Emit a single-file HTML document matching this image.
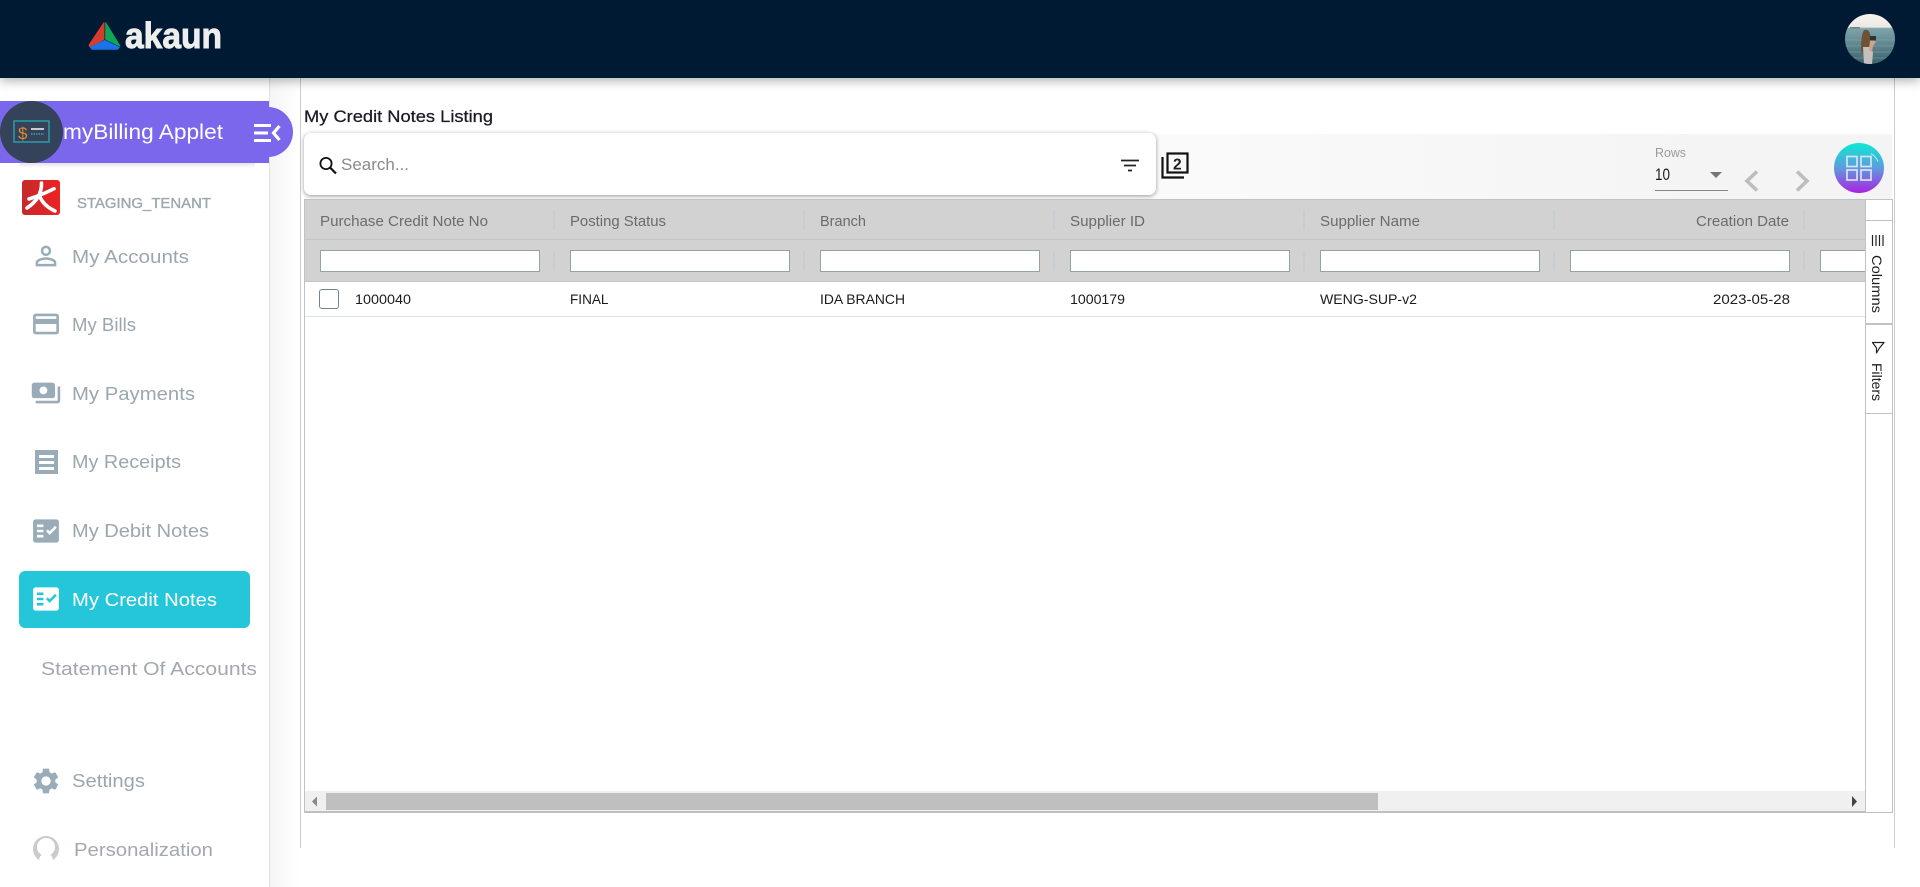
<!DOCTYPE html>
<html lang="en"><head><meta charset="utf-8"><title>My Credit Notes Listing</title>
<style>
html,body{margin:0;padding:0;width:1920px;height:887px;overflow:hidden;background:#fff}
div{position:absolute;box-sizing:border-box}
svg{position:absolute;left:0;top:0}
text{font-family:"Liberation Sans",sans-serif}
.n{font-size:18.5px;fill:#9ba7ae}
.h{font-size:14.5px;fill:#6b6b6b}
.r{font-size:14px;fill:#1c1c1c}
.sep{width:2px;height:20px;background:#c8cdd1}
.inp{width:220px;height:22px;background:#fff;border:1px solid #93a3a5;top:250px}
</style></head><body>
<div style="left:269px;top:78px;width:31px;height:809px;background:linear-gradient(90deg,#f5f5f5,#ffffff);border-left:1px solid #e0e0e0"></div>
<div style="left:300px;top:78px;width:1px;height:770px;background:#ccc"></div>
<div style="left:1894px;top:78px;width:1px;height:770px;background:#ccc"></div>

<!-- toolbar -->
<div style="left:304px;top:134px;width:1588px;height:65px;background:linear-gradient(90deg,#fbfbfb 50%,#f4f4f4 90%)"></div>
<div style="left:304px;top:133px;width:852px;height:62px;background:#fff;border-radius:7px;box-shadow:0 1px 4px rgba(0,0,0,.4)"></div>

<!-- grid -->
<div style="left:304px;top:199px;width:1589px;height:614px;background:#fff;border:1px solid #bdc3c7;border-bottom:2px solid #c0c0c0"></div>
<div style="left:305px;top:200px;width:1561px;height:40px;background:#d2d2d2;border-bottom:1px solid #bdc6cc"></div>
<div style="left:305px;top:240px;width:1561px;height:42px;background:#d2d2d2;border-bottom:1px solid #bdc6cc"></div>
<div style="left:305px;top:316px;width:1561px;height:1px;background:#dde2e6"></div>
<div class="sep" style="left:553px;top:210px"></div><div class="sep" style="left:803px;top:210px"></div><div class="sep" style="left:1053px;top:210px"></div><div class="sep" style="left:1303px;top:210px"></div><div class="sep" style="left:1553px;top:210px"></div><div class="sep" style="left:1803px;top:210px"></div>
<div class="sep" style="left:553px;top:251px"></div><div class="sep" style="left:803px;top:251px"></div><div class="sep" style="left:1053px;top:251px"></div><div class="sep" style="left:1303px;top:251px"></div><div class="sep" style="left:1553px;top:251px"></div><div class="sep" style="left:1803px;top:251px"></div>
<div class="inp" style="left:320px"></div><div class="inp" style="left:570px"></div><div class="inp" style="left:820px"></div><div class="inp" style="left:1070px"></div><div class="inp" style="left:1320px"></div><div class="inp" style="left:1570px"></div>
<div class="inp" style="left:1820px;width:46px;border-right:0"></div>
<div style="left:319px;top:289px;width:20px;height:20px;border:1.5px solid #75858c;border-radius:3px;background:#fff"></div>
<div style="left:305px;top:791px;width:1560px;height:20px;background:#f0f0f0"></div>
<div style="left:326px;top:793px;width:1052px;height:17px;background:#bfbfbf"></div>
<!-- side buttons -->
<div style="left:1865px;top:200px;width:27px;height:612px;background:#fff;border-left:1px solid #bdc3c7"></div>
<div style="left:1866px;top:220px;width:26px;height:1px;background:#bdc3c7"></div>
<div style="left:1866px;top:323px;width:26px;height:2px;background:#bdc3c7"></div>
<div style="left:1866px;top:413px;width:26px;height:1px;background:#bdc3c7"></div>

<!-- sidebar -->
<div style="left:0;top:78px;width:269px;height:809px;background:#fff"></div>
<div style="left:20px;top:163px;width:235px;height:5px;background:linear-gradient(#e4e4e4,#fff)"></div>
<div style="left:0;top:101px;width:269px;height:62px;background:#7b67ec"></div>
<div style="left:200px;top:107px;width:93px;height:50px;background:#7b67ec;border-radius:0 25px 25px 0"></div>
<div style="left:0;top:101px;width:63px;height:62px;background:#34425a;border-radius:50%"></div>
<div style="left:19px;top:571px;width:231px;height:57px;background:#26c6da;border-radius:6px"></div>

<!-- header -->
<div style="left:0;top:0;width:1920px;height:78px;background:#001a33;box-shadow:0 3px 10px rgba(0,0,0,.3)"></div>

<svg width="1920" height="887" viewBox="0 0 1920 887" xmlns="http://www.w3.org/2000/svg">
<defs>
<linearGradient id="fab" x1="0" y1="0" x2="0" y2="1"><stop offset="0" stop-color="#0cead2"/><stop offset=".5" stop-color="#5f9bde"/><stop offset="1" stop-color="#ab22e2"/></linearGradient>
<linearGradient id="sea" x1="0" y1="0" x2="0" y2="1"><stop offset="0" stop-color="#f7f2ed"/><stop offset=".26" stop-color="#eee9e4"/><stop offset=".29" stop-color="#7fa3aa"/><stop offset="1" stop-color="#3a636b"/></linearGradient>
<linearGradient id="tl" x1="0" y1="0" x2="1" y2="0"><stop offset="0" stop-color="#c42a2c"/><stop offset="1" stop-color="#ee2222"/></linearGradient>
<clipPath id="av"><circle cx="1870" cy="39" r="25"/></clipPath>
</defs>

<!-- logo -->
<path d="M89 45 104 22.700V39.300L90 47z" fill="#d63c2e" stroke="#d63c2e" stroke-linejoin="round"/>
<path d="M105.700 22.700 120 46 105.700 39.300z" fill="#0fa65a" stroke="#0fa65a" stroke-linejoin="round"/>
<path d="M90.500 47.300 104.700 40.500 119.300 47.300 117.300 49.300H92z" fill="#1a73e8" stroke="#1a73e8" stroke-linejoin="round"/>
<text x="125" y="48" font-size="36" font-weight="700" fill="#eeeeee" stroke="#eeeeee" stroke-width=".9" textLength="97" lengthAdjust="spacingAndGlyphs">akaun</text>

<!-- avatar -->
<g clip-path="url(#av)">
<rect x="1845" y="14" width="50" height="50" fill="url(#sea)"/>
<rect x="1850" y="27" width="10" height="1.500" fill="#6c8688"/>
<path d="M1845 40h50M1845 46h50M1845 52h50M1845 58h50" stroke="#a8c2c6" stroke-width=".6" opacity=".6"/>
<path d="M1861 50c0-9 1-19 3.500-20 3-1 5 1 5.500 4l1 5-2 9-1 6h-6z" fill="#6e5238"/>
<path d="M1863 47h8l2 6-1 11h-8z" fill="#c4c0bd"/>
<path d="M1870 40l4-1 2 3-3 4-1 6-3-2z" fill="#cfa389"/>
<rect x="1870" y="36" width="6" height="4.500" fill="#2c3438"/>
</g>

<!-- purple band -->
<rect x="14" y="121" width="35" height="21" fill="none" stroke="#2aa4ad" stroke-width="1.400"/>
<text x="18" y="139" font-size="17" fill="#dd8a2a">$</text>
<rect x="31" y="128" width="13" height="2" fill="#c8ccd2"/>
<path d="M31 134h13" stroke="#38b5c0" stroke-width="1.200" stroke-dasharray="1.500 1"/>
<text x="63" y="139" font-size="21" fill="#fff" textLength="160" lengthAdjust="spacingAndGlyphs">myBilling Applet</text>
<path d="M254 125.500h17M254 133h14M254 140.500h17" stroke="#fff" stroke-width="3"/>
<path d="M279.500 126l-6 7 6 7" fill="none" stroke="#fff" stroke-width="3.200"/>

<!-- tenant -->
<rect x="22" y="180" width="38" height="35" rx="3" fill="url(#tl)"/>
<path d="M41.500 183Q42 198 27 208M29 199Q41.700 195 54 188.700M40 197Q44 206 55 211" fill="none" stroke="#fff" stroke-width="3.600" stroke-linecap="round"/>
<text x="77" y="208" font-size="14.500" fill="#9ca7ad" stroke="#9ca7ad" stroke-width=".35" textLength="134" lengthAdjust="spacingAndGlyphs">STAGING_TENANT</text>

<!-- nav icons -->
<g fill="#9aacb8">
<svg x="30.500" y="240.500" width="31" height="31" viewBox="0 0 24 24"><path d="M12 5.900c1.160 0 2.100.94 2.100 2.100s-.94 2.100-2.100 2.100S9.900 9.160 9.900 8s.94-2.100 2.100-2.100m0 9c2.970 0 6.100 1.460 6.100 2.100v1.100H5.900V17c0-.64 3.130-2.100 6.100-2.100M12 4C9.790 4 8 5.790 8 8s1.790 4 4 4 4-1.790 4-4-1.790-4-4-4zm0 9c-2.670 0-8 1.340-8 4v3h16v-3c0-2.660-5.330-4-8-4z"/></svg>
<svg x="30.500" y="308.500" width="31" height="31" viewBox="0 0 24 24"><path d="M20 4H4c-1.110 0-1.990.89-1.990 2L2 18c0 1.110.89 2 2 2h16c1.110 0 2-.89 2-2V6c0-1.110-.89-2-2-2zm0 14H4v-6h16v6zm0-10H4V6h16v2z"/></svg>
<svg x="30.500" y="377.500" width="31" height="31" viewBox="0 0 24 24"><path d="M19 14V6c0-1.100-.9-2-2-2H3c-1.100 0-2 .9-2 2v8c0 1.100.9 2 2 2h14c1.100 0 2-.9 2-2zm-9-1c-1.660 0-3-1.340-3-3s1.340-3 3-3 3 1.340 3 3-1.340 3-3 3zm13-6v11c0 1.100-.9 2-2 2H4v-2h17V7h2z"/></svg>
<path fill-rule="evenodd" d="M35 450h23v24H35zM39 455v3h15v-3zM39 461v3h15v-3zM39 467v3h15v-3z"/>
<svg x="30.500" y="515.500" width="31" height="31" viewBox="0 0 24 24"><path d="M20 3H4c-1.100 0-2 .9-2 2v14c0 1.100.9 2 2 2h16c1.100 0 2-.9 2-2V5c0-1.100-.9-2-2-2zM10 17H5v-2h5v2zm0-4H5v-2h5v2zm0-4H5V7h5v2zm4.820 6L12 12.160l1.410-1.410 1.410 1.420L18.990 8l1.420 1.420L14.820 15z"/></svg>
<svg x="30.500" y="765.500" width="31" height="31" viewBox="0 0 24 24"><path d="M19.140 12.940c.04-.3.06-.61.06-.94 0-.32-.02-.64-.07-.94l2.030-1.580c.18-.14.23-.41.12-.61l-1.920-3.320c-.12-.22-.37-.29-.59-.22l-2.390.96c-.5-.38-1.030-.7-1.620-.94l-.36-2.540c-.04-.24-.24-.41-.48-.41h-3.840c-.24 0-.43.17-.47.41l-.36 2.540c-.59.24-1.130.57-1.620.94l-2.390-.96c-.22-.08-.47 0-.59.22L2.740 8.870c-.12.21-.08.47.12.61l2.030 1.580c-.05.3-.09.63-.09.94s.02.64.07.94l-2.030 1.580c-.18.14-.23.41-.12.61l1.920 3.320c.12.22.37.29.59.22l2.390-.96c.5.38 1.030.7 1.620.94l.36 2.540c.05.24.24.41.48.41h3.840c.24 0 .44-.17.47-.41l.36-2.540c.59-.24 1.130-.56 1.620-.94l2.390.96c.22.08.47 0 .59-.22l1.920-3.320c.12-.22.07-.47-.12-.61l-2.010-1.580zM12 15.600c-1.980 0-3.600-1.620-3.600-3.600s1.620-3.600 3.600-3.600 3.600 1.620 3.600 3.600-1.620 3.600-3.600 3.600z"/></svg>
</g>
<svg x="30.500" y="583.500" width="31" height="31" viewBox="0 0 24 24" fill="#fff"><path d="M20 3H4c-1.100 0-2 .9-2 2v14c0 1.100.9 2 2 2h16c1.100 0 2-.9 2-2V5c0-1.100-.9-2-2-2zM10 17H5v-2h5v2zm0-4H5v-2h5v2zm0-4H5V7h5v2zm4.820 6L12 12.160l1.410-1.410 1.410 1.420L18.990 8l1.420 1.420L14.820 15z"/></svg>
<circle cx="46" cy="849" r="13" fill="#cbcbcb"/>
<circle cx="46" cy="847" r="9" fill="#fff"/>
<path d="M39 863c0-6 1-9 7-9s7 3 7 9z" fill="#fff"/>

<!-- nav text -->
<text class="n" x="72" y="263" textLength="117" lengthAdjust="spacingAndGlyphs">My Accounts</text>
<text class="n" x="72" y="331" textLength="64" lengthAdjust="spacingAndGlyphs">My Bills</text>
<text class="n" x="72" y="400" textLength="123" lengthAdjust="spacingAndGlyphs">My Payments</text>
<text class="n" x="72" y="468" textLength="109" lengthAdjust="spacingAndGlyphs">My Receipts</text>
<text class="n" x="72" y="537" textLength="137" lengthAdjust="spacingAndGlyphs">My Debit Notes</text>
<text class="n" x="72" y="606" style="fill:#fff" textLength="145" lengthAdjust="spacingAndGlyphs">My Credit Notes</text>
<text class="n" x="41" y="675" style="fill:#a2a9ae" textLength="216" lengthAdjust="spacingAndGlyphs">Statement Of Accounts</text>
<text class="n" x="72" y="787" textLength="73" lengthAdjust="spacingAndGlyphs">Settings</text>
<text class="n" x="74" y="856" style="fill:#a2a9ae" textLength="139" lengthAdjust="spacingAndGlyphs">Personalization</text>

<!-- toolbar content -->
<text x="304" y="122" font-size="16.500" fill="#1a1a28" stroke="#1a1a28" stroke-width=".25" textLength="189" lengthAdjust="spacingAndGlyphs">My Credit Notes Listing</text>
<circle cx="326" cy="163.500" r="5.600" fill="none" stroke="#111" stroke-width="1.800"/>
<path d="M330 167.500l6 6" stroke="#111" stroke-width="2.200"/>
<text x="341" y="170" font-size="16.500" fill="#8b8b8b" textLength="68" lengthAdjust="spacingAndGlyphs">Search...</text>
<path d="M1121 160.500h18M1124 165.500h12M1128 170.500h4" stroke="#222" stroke-width="1.800"/>
<rect x="1167.500" y="153.500" width="20" height="19" fill="none" stroke="#111" stroke-width="2.200"/>
<path d="M1162.500 157v20.500h21.500" fill="none" stroke="#111" stroke-width="2.200"/>
<text x="1173" y="169.500" font-size="15.500" font-weight="700" fill="#222">2</text>
<text x="1655" y="157" font-size="12.500" fill="#9b9b9b" textLength="31" lengthAdjust="spacingAndGlyphs">Rows</text>
<text x="1655" y="180" font-size="16.500" fill="#1c1c1c" textLength="15" lengthAdjust="spacingAndGlyphs">10</text>
<path d="M1710 172h12l-6 6z" fill="#757575"/>
<rect x="1655" y="190" width="73" height="1" fill="#888"/>
<path d="M1757 171.500l-10 9.500 10 9.500M1797 171.500l10 9.500-10 9.500" fill="none" stroke="#bdbdbd" stroke-width="3.600"/>
<circle cx="1859" cy="168" r="25" fill="url(#fab)"/>
<path d="M1871 153.500a18 18 0 0 1 7 8" fill="none" stroke="#b8f5ee" stroke-width="1"/>
<g fill="none" stroke="#dbe2f6" stroke-width="1.700"><rect x="1847" y="156.500" width="10" height="10"/><rect x="1861" y="156.500" width="10" height="10"/><rect x="1847" y="170" width="10" height="10"/><rect x="1861" y="170" width="10" height="10"/></g>

<!-- grid text -->
<text class="h" x="320" y="226" textLength="168" lengthAdjust="spacingAndGlyphs">Purchase Credit Note No</text>
<text class="h" x="570" y="226" textLength="96" lengthAdjust="spacingAndGlyphs">Posting Status</text>
<text class="h" x="820" y="226" textLength="46" lengthAdjust="spacingAndGlyphs">Branch</text>
<text class="h" x="1070" y="226" textLength="75" lengthAdjust="spacingAndGlyphs">Supplier ID</text>
<text class="h" x="1320" y="226" textLength="100" lengthAdjust="spacingAndGlyphs">Supplier Name</text>
<text class="h" x="1696" y="226" textLength="93" lengthAdjust="spacingAndGlyphs">Creation Date</text>
<text class="r" x="355" y="304" textLength="56" lengthAdjust="spacingAndGlyphs">1000040</text>
<text class="r" x="570" y="304" textLength="38.500" lengthAdjust="spacingAndGlyphs">FINAL</text>
<text class="r" x="820" y="304" textLength="85" lengthAdjust="spacingAndGlyphs">IDA BRANCH</text>
<text class="r" x="1070" y="304" textLength="55" lengthAdjust="spacingAndGlyphs">1000179</text>
<text class="r" x="1320" y="304" textLength="97" lengthAdjust="spacingAndGlyphs">WENG-SUP-v2</text>
<text class="r" x="1713" y="304" textLength="77" lengthAdjust="spacingAndGlyphs">2023-05-28</text>

<!-- side buttons -->
<path d="M1872.500 235v11M1876 235v11M1879.500 235v11M1883 235v11" stroke="#222" stroke-width="1.200"/>
<text transform="translate(1872 255) rotate(90)" font-size="13.500" fill="#1c1c1c" textLength="58" lengthAdjust="spacingAndGlyphs">Columns</text>
<path d="M1872.500 342.500h11.500l-4.500 5.500-3 5v-5z" fill="none" stroke="#222" stroke-width="1.200" stroke-linejoin="round"/>
<text transform="translate(1872 363) rotate(90)" font-size="13.500" fill="#1c1c1c" textLength="38" lengthAdjust="spacingAndGlyphs">Filters</text>

<!-- scroll arrows -->
<path d="M312 801.500l5-5v10z" fill="#888"/>
<path d="M1852 796l5 5.500-5 5.500z" fill="#444"/>
</svg>
</body></html>
